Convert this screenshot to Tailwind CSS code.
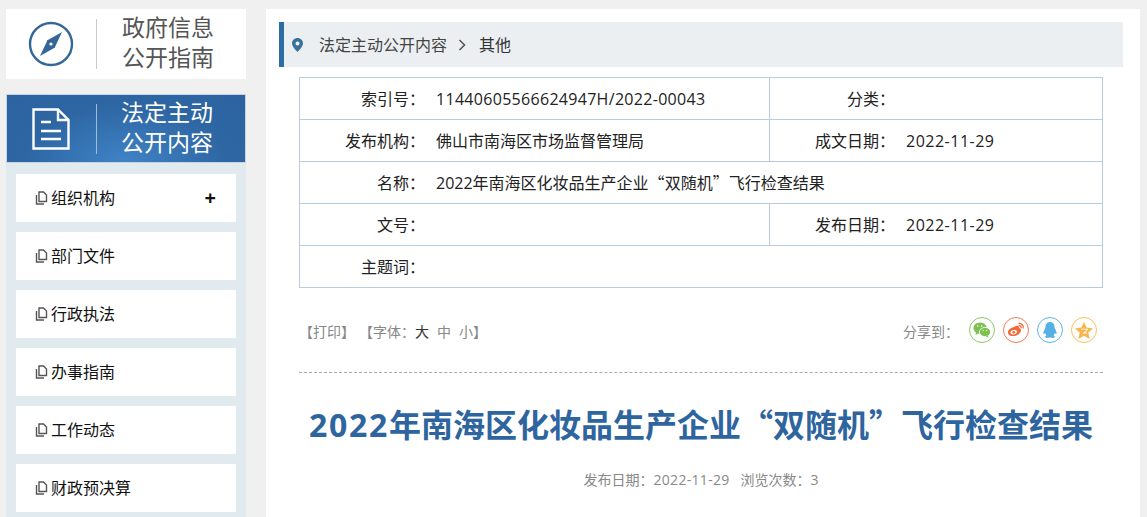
<!DOCTYPE html>
<html lang="zh-CN">
<head>
  <meta charset="UTF-8" />
  <title>2022年南海区化妆品生产企业“双随机”飞行检查结果</title>
  <script src="https://cdn.jsdelivr.net/npm/@tailwindcss/browser@4"></script>
</head>
<body class="bg-[#f0f0f0] font-['Open_Sans','Noto_Sans_CJK_SC',sans-serif] text-[#222] overflow-hidden">
  <div class="flex h-[517px] overflow-hidden pl-[6px] pt-[9px]">

    <!-- left column -->
    <aside class="w-[240px] shrink-0">
      <div class="h-[70px] bg-white flex items-center">
        <svg class="ml-[22px] w-[46px] h-[46px]" viewBox="0 0 46 46">
          <circle cx="23" cy="23" r="21" fill="none" stroke="#336699" stroke-width="2.4"/>
          <path d="M34 11 L26.5 27 L19 19.5 Z" fill="#336699"/>
          <path d="M12 35 L19.5 19 L27 26.5 Z" fill="#336699"/>
          <circle cx="23" cy="23" r="1.6" fill="#fff"/>
        </svg>
        <div class="ml-[22px] w-px h-[50px] bg-[#ccc]"></div>
        <div class="ml-[25px] -mt-[5px] text-[23px] leading-[30px] text-[#555]">政府信息<br>公开指南</div>
      </div>

      <div class="mt-[15px] h-[69px] flex items-center border border-[#c5d5e2] bg-[radial-gradient(ellipse_at_50%_100%,#3f83c6_0%,#2e66a3_60%,#2c62a0_100%)]">
        <svg class="ml-[25px] w-[38px] h-[42px]" viewBox="0 0 38 42" fill="none" stroke="#fff" stroke-width="2.4">
          <path d="M1.5 1.5 H26 L36.5 12 V40.5 H1.5 Z"/>
          <path d="M26 1.5 V12 H36.5"/>
          <path d="M9 14 H19 M9 23 H29 M9 31 H29"/>
        </svg>
        <div class="ml-[26px] w-px h-[50px] bg-[#9fbbd6]"></div>
        <div class="ml-[24px] -mt-[4px] text-[23px] leading-[30px] text-white">法定主动<br>公开内容</div>
      </div>

      <ul class="bg-[#e0eaef] px-[10px] pt-[11px] flex flex-col gap-[10px] h-[400px] text-[16px] text-[#111]">
        <li class="h-[48px] shrink-0 bg-white flex items-center pl-[19px] pr-[20px]">
          <svg class="w-[13px] h-[14px] mr-[3px]" viewBox="0 0 13 14" fill="none" stroke="#555" stroke-width="1.4"><path d="M4 1 H8.5 L11.5 4 V10.5 H4 Z"/><path d="M1.5 4 V13 H9"/></svg>
          <span>组织机构</span>
          <span class="ml-auto font-bold text-[#111] text-[20px] leading-none">+</span>
        </li>
        <li class="h-[48px] shrink-0 bg-white flex items-center pl-[19px]">
          <svg class="w-[13px] h-[14px] mr-[3px]" viewBox="0 0 13 14" fill="none" stroke="#555" stroke-width="1.4"><path d="M4 1 H8.5 L11.5 4 V10.5 H4 Z"/><path d="M1.5 4 V13 H9"/></svg>
          <span>部门文件</span>
        </li>
        <li class="h-[48px] shrink-0 bg-white flex items-center pl-[19px]">
          <svg class="w-[13px] h-[14px] mr-[3px]" viewBox="0 0 13 14" fill="none" stroke="#555" stroke-width="1.4"><path d="M4 1 H8.5 L11.5 4 V10.5 H4 Z"/><path d="M1.5 4 V13 H9"/></svg>
          <span>行政执法</span>
        </li>
        <li class="h-[48px] shrink-0 bg-white flex items-center pl-[19px]">
          <svg class="w-[13px] h-[14px] mr-[3px]" viewBox="0 0 13 14" fill="none" stroke="#555" stroke-width="1.4"><path d="M4 1 H8.5 L11.5 4 V10.5 H4 Z"/><path d="M1.5 4 V13 H9"/></svg>
          <span>办事指南</span>
        </li>
        <li class="h-[48px] shrink-0 bg-white flex items-center pl-[19px]">
          <svg class="w-[13px] h-[14px] mr-[3px]" viewBox="0 0 13 14" fill="none" stroke="#555" stroke-width="1.4"><path d="M4 1 H8.5 L11.5 4 V10.5 H4 Z"/><path d="M1.5 4 V13 H9"/></svg>
          <span>工作动态</span>
        </li>
        <li class="h-[48px] shrink-0 bg-white flex items-center pl-[19px]">
          <svg class="w-[13px] h-[14px] mr-[3px]" viewBox="0 0 13 14" fill="none" stroke="#555" stroke-width="1.4"><path d="M4 1 H8.5 L11.5 4 V10.5 H4 Z"/><path d="M1.5 4 V13 H9"/></svg>
          <span>财政预决算</span>
        </li>
      </ul>
    </aside>

    <!-- main -->
    <main class="ml-[20px] w-[874px] h-[520px] shrink-0 bg-white pt-[13px] pl-[13px] pr-[17px]">
      <div class="h-[45px] bg-[#eceff2] border-l-[5px] border-[#2e6da4] flex items-center text-[16px] text-[#444]">
        <svg class="ml-[8px] w-[11px] h-[14px]" viewBox="0 0 11 14"><path fill-rule="evenodd" fill="#3a7199" d="M5.5 0 C2.5 0 0 2.4 0 5.3 C0 9 5.5 14 5.5 14 C5.5 14 11 9 11 5.3 C11 2.4 8.5 0 5.5 0 Z M5.5 3.4 A2 2 0 1 1 5.5 7.4 A2 2 0 1 1 5.5 3.4 Z"/></svg>
        <span class="ml-[16px]">法定主动公开内容</span>
        <svg class="ml-[11px] w-[8px] h-[12px]" viewBox="0 0 8 12" fill="none" stroke="#555" stroke-width="1.6"><path d="M1.5 1 L6.5 6 L1.5 11"/></svg>
        <span class="ml-[13px] text-[#333]">其他</span>
      </div>

      <div class="ml-[20px] mt-[10px] w-[804px] border border-[#b7cde0] text-[16px] text-[#222]">
        <div class="grid grid-cols-[125px_345px_125px_1fr] h-[42px] items-stretch border-b border-[#b7cde0]">
          <div class="flex items-center justify-end">索引号：</div>
          <div class="flex items-center pl-[11px] border-r border-[#b7cde0] tracking-[0.3px]">11440605566624947H/2022-00043</div>
          <div class="flex items-center justify-end">分类：</div>
          <div class="flex items-center pl-[11px]"></div>
        </div>
        <div class="grid grid-cols-[125px_345px_125px_1fr] h-[42px] items-stretch border-b border-[#b7cde0]">
          <div class="flex items-center justify-end">发布机构：</div>
          <div class="flex items-center pl-[11px] border-r border-[#b7cde0]">佛山市南海区市场监督管理局</div>
          <div class="flex items-center justify-end">成文日期：</div>
          <div class="flex items-center pl-[11px] tracking-[0.5px]">2022-11-29</div>
        </div>
        <div class="grid grid-cols-[125px_1fr] h-[42px] items-stretch border-b border-[#b7cde0]">
          <div class="flex items-center justify-end">名称：</div>
          <div class="pl-[11px] leading-[41px]">2022年南海区化妆品生产企业<span class="font-['Noto_Sans_CJK_SC']">“</span>双随机<span class="font-['Noto_Sans_CJK_SC']">”</span>飞行检查结果</div>
        </div>
        <div class="grid grid-cols-[125px_345px_125px_1fr] h-[42px] items-stretch border-b border-[#b7cde0]">
          <div class="flex items-center justify-end">文号：</div>
          <div class="flex items-center pl-[11px] border-r border-[#b7cde0]"></div>
          <div class="flex items-center justify-end">发布日期：</div>
          <div class="flex items-center pl-[11px] tracking-[0.5px]">2022-11-29</div>
        </div>
        <div class="grid grid-cols-[125px_1fr] h-[41px] items-stretch">
          <div class="flex items-center justify-end">主题词：</div>
          <div></div>
        </div>
      </div>

      <div class="ml-[20px] w-[804px] h-[85px] border-b border-dashed border-[#aaa] flex items-start pt-[30px] text-[14px] text-[#888]">
        <span class="leading-[28px]">【打印】</span>
        <span class="ml-[4px] leading-[28px]">【字体：<span class="text-[#333]">大</span><span class="ml-[8px]">中</span><span class="ml-[8px]">小</span>】</span>
        <span class="ml-auto mr-[10px] leading-[28px]">分享到：</span>
        <div class="flex gap-[8px] mr-[6px] -mt-[1px]">
          <span class="w-[26px] h-[26px] rounded-full border border-[#8cc863] flex items-center justify-center">
            <svg class="w-[18px] h-[16px]" viewBox="0 0 18 16" fill="#7dc14f"><ellipse cx="7" cy="6" rx="6.6" ry="5.6"/><path d="M3 10 L2.5 13 L6 11 Z"/><ellipse cx="12" cy="10" rx="5.6" ry="4.6" stroke="#fff" stroke-width="0.8"/><path d="M14.5 13.5 L15.5 15.5 L12.5 14.5 Z"/><circle cx="4.8" cy="4" r="0.8" fill="#fff"/><circle cx="8.6" cy="4" r="0.8" fill="#fff"/><circle cx="10.2" cy="8.6" r="0.7" fill="#fff"/><circle cx="13.8" cy="8.6" r="0.7" fill="#fff"/></svg>
          </span>
          <span class="w-[26px] h-[26px] rounded-full border border-[#f47b53] flex items-center justify-center">
            <svg class="w-[18px] h-[16px]" viewBox="0 0 18 16" fill="none"><path fill="#f4693a" fill-rule="evenodd" d="M7 5 C10 3 12.5 3.5 12 6 C14 6.3 14.5 8 13.5 10 C12 13 8.5 14.5 5 14 C2 13.5 .5 12 1 9.5 C1.5 7.5 4 5.8 7 5 Z M6.8 8 C4.8 8.2 3.3 9.4 3.5 10.8 C3.7 12 5.3 12.7 7.2 12.4 C9 12.1 10.3 10.9 10.1 9.6 C9.9 8.5 8.5 7.8 6.8 8 Z"/><circle cx="6.8" cy="10.3" r="1.4" fill="#f4693a"/><path d="M11.5 1.5 C14.5 1 17 3.5 16.2 6.5 M11.8 3.7 C13.4 3.4 14.5 4.6 14.1 6" stroke="#f4693a" stroke-width="1.3"/></svg>
          </span>
          <span class="w-[26px] h-[26px] rounded-full border border-[#5db5e8] flex items-center justify-center">
            <svg class="w-[14px] h-[17px]" viewBox="0 0 14 17" fill="#55b0e6"><path d="M7 0 C10 0 11.6 2.4 11.6 5.2 C11.6 6 12 6.4 12.4 7.4 C13.6 9.6 14 11.6 13.2 12 C12.8 12.2 12.2 11.6 11.8 11 C11.6 12 11.2 12.8 10.6 13.4 C11.6 13.8 12 14.4 11.8 15 C11.4 16 9.2 16.2 7.6 15.4 H6.4 C4.8 16.2 2.6 16 2.2 15 C2 14.4 2.4 13.8 3.4 13.4 C2.8 12.8 2.4 12 2.2 11 C1.8 11.6 1.2 12.2 .8 12 C0 11.6 .4 9.6 1.6 7.4 C2 6.4 2.4 6 2.4 5.2 C2.4 2.4 4 0 7 0 Z"/></svg>
          </span>
          <span class="w-[26px] h-[26px] rounded-full border border-[#fcc15a] flex items-center justify-center">
            <svg class="w-[18px] h-[17px]" viewBox="0 0 18 17"><path fill="#f9b54a" fill-rule="evenodd" d="M9 0 L11.6 5.6 L18 6.4 L13.3 10.6 L14.6 17 L9 13.8 L3.4 17 L4.7 10.6 L0 6.4 L6.4 5.6 Z M6 7.5 H12 L7.5 11.5 H12 V10.5 H9.8 L13 7.5 V6.7 H6 Z"/></svg>
          </span>
        </div>
      </div>

      <h1 class="ml-[20px] w-[804px] mt-[28px] text-center text-[32px] leading-[44px] font-bold text-[#2e659f] whitespace-nowrap"><span class="tracking-[1.7px]">2022</span>年南海区化妆品生产企业<span class="font-['Noto_Sans_CJK_SC']">“</span>双随机<span class="font-['Noto_Sans_CJK_SC']">”</span>飞行检查结果</h1>
      <div class="ml-[20px] w-[804px] mt-[23px] text-center text-[14px] leading-[20px] text-[#888]">发布日期：<span class="tracking-[0.3px]">2022-11-29</span>&nbsp;&nbsp;&nbsp;浏览次数：3</div>
    </main>
  </div>
</body>
</html>
